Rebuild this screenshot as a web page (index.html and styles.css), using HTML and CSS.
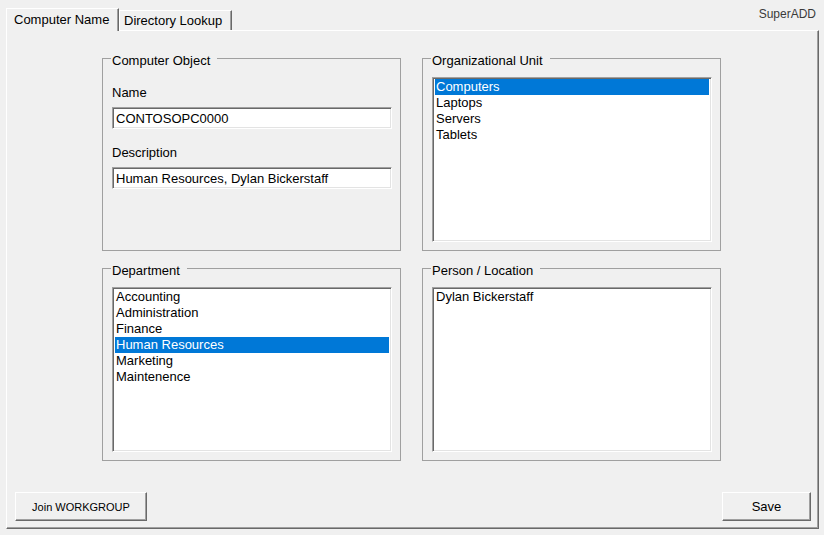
FILE: index.html
```html
<!DOCTYPE html>
<html>
<head>
<meta charset="utf-8">
<link rel="stylesheet" href="styles.css">
</head>
<body>
<div class="window">
  <div class="tabbar">
    <div class="tab active">Computer Name</div>
    <div class="tab">Directory Lookup</div>
    <div class="brand">SuperADD</div>
  </div>
  <div class="panel">
    <div class="groups">
      <fieldset class="group">
        <legend>Computer Object</legend>
        <div class="label first">Name</div>
        <div class="textbox">CONTOSOPC0000</div>
        <div class="label">Description</div>
        <div class="textbox">Human Resources, Dylan Bickerstaff</div>
      </fieldset>
      <fieldset class="group">
        <legend>Organizational Unit</legend>
        <div class="listbox">
          <div class="item selected">Computers</div>
          <div class="item">Laptops</div>
          <div class="item">Servers</div>
          <div class="item">Tablets</div>
        </div>
      </fieldset>
      <fieldset class="group">
        <legend>Department</legend>
        <div class="listbox">
          <div class="item">Accounting</div>
          <div class="item">Administration</div>
          <div class="item">Finance</div>
          <div class="item selected">Human Resources</div>
          <div class="item">Marketing</div>
          <div class="item">Maintenence</div>
        </div>
      </fieldset>
      <fieldset class="group">
        <legend>Person / Location</legend>
        <div class="listbox">
          <div class="item">Dylan Bickerstaff</div>
        </div>
      </fieldset>
    </div>
    <div class="actions">
      <button class="btn join">Join WORKGROUP</button>
      <button class="btn save">Save</button>
    </div>
  </div>
</div>
</body>
</html>
```

FILE: styles.css
```css
* { box-sizing: border-box; }
html, body {
  margin: 0;
  padding: 0;
  background: #f0f0f0;
}
body {
  font-family: "Liberation Sans", Arial, sans-serif;
  font-size: 13px;
  color: #000;
}
.window {
  width: 824px;
  height: 535px;
  background: #f0f0f0;
  overflow: hidden;
}
.tabbar {
  display: flex;
  align-items: flex-end;
  height: 30px;
  padding-left: 6px;
}
.tab {
  width: 113px;
  height: 20px;
  line-height: 19px;
  padding-left: 4px;
  background: #f0f0f0;
  border-top: 1px solid #fff;
  border-left: 1px solid #fff;
  border-right: 1px solid #696969;
  box-shadow: inset -1px 0 #a0a0a0;
  white-space: nowrap;
}
.tab.active {
  position: relative;
  z-index: 1;
  height: 23px;
  line-height: 21px;
  margin-bottom: -1px;
  padding-left: 7px;
}
.brand {
  margin-left: auto;
  align-self: flex-start;
  margin-top: 7px;
  margin-right: 8px;
  font-size: 12px;
  color: #3a3a3a;
}
.panel {
  width: 813px;
  height: 499px;
  margin-left: 6px;
  border-top: 1px solid #fff;
  border-left: 1px solid #fff;
  border-right: 1px solid #696969;
  border-bottom: 1px solid #696969;
  box-shadow: inset -1px -1px #a0a0a0;
  display: flex;
  flex-direction: column;
  padding: 17px 7px 7px 8px;
}
.groups {
  display: grid;
  grid-template-columns: 299px 299px;
  grid-template-rows: 203px 203px;
  column-gap: 21px;
  row-gap: 7px;
  margin-left: 87px;
}
.group {
  margin: 0;
  padding: 0 8px 0 9px;
  min-width: 0;
  border: 1px solid #a0a0a0;
}
.group legend {
  padding: 5px 7px 0 1px;
  margin-left: -1px;
  line-height: 16px;
}
.label {
  line-height: 16px;
  margin-top: 16px;
  margin-bottom: 6px;
}
.label.first {
  margin-top: 16px;
}
.textbox {
  height: 22px;
  background: #fff;
  border: 1px solid;
  border-color: #a0a0a0 #fff #fff #a0a0a0;
  box-shadow: inset 1px 1px #696969, inset -1px -1px #e3e3e3;
  padding: 2px 3px 0 3px;
  line-height: 17px;
  white-space: nowrap;
}
.listbox {
  margin-top: 8px;
  height: 165px;
  background: #fff;
  border: 1px solid;
  border-color: #a0a0a0 #fff #fff #a0a0a0;
  box-shadow: inset 1px 1px #696969, inset -1px -1px #e3e3e3;
  padding: 1px 1px;
}
.item {
  height: 16px;
  line-height: 16px;
  padding-left: 1px;
  margin-left: 1px;
  margin-right: 1px;
  white-space: nowrap;
}
.item.selected {
  background: #0078d7;
  color: #fff;
}
.actions {
  margin-top: auto;
  display: flex;
  justify-content: space-between;
  align-items: flex-end;
}
.btn {
  font-family: "Liberation Sans", Arial, sans-serif;
  color: #000;
  height: 29px;
  background: #f0f0f0;
  border: 1px solid;
  border-color: #fff #696969 #696969 #fff;
  box-shadow: inset -1px -1px #a0a0a0;
  padding: 0;
  margin: 0;
}
.join {
  width: 132px;
  font-size: 11px;
}
.save {
  width: 89px;
  font-size: 13px;
}
```
